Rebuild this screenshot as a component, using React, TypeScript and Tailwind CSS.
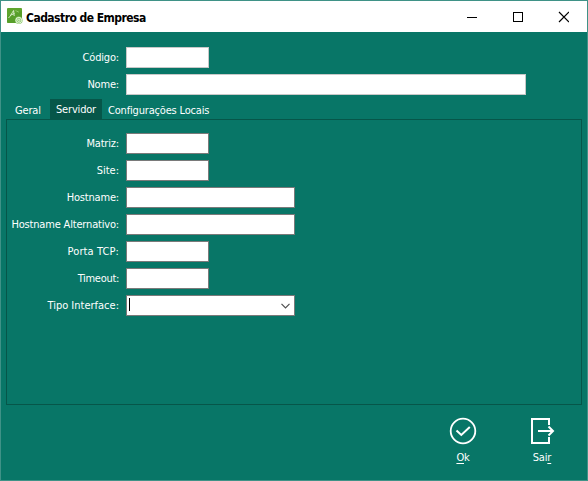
import type { ReactNode } from "react";

const font = "font-['DejaVu_Sans_Condensed','DejaVu_Sans',sans-serif] [font-stretch:condensed]";

function Field({ label, tracking = "tracking-[-0.18px]", width, border, children }: { label: string; tracking?: string; width: string; border: string; children?: ReactNode }) {
  return (
    <div className="flex h-[21px] items-center">
      <label className={`w-[118px] shrink-0 whitespace-nowrap text-right leading-[21px] ${tracking}`}>{label}</label>
      <div className={`ml-[7px] flex h-[21px] items-center border bg-white ${width} ${border}`}>{children}</div>
    </div>
  );
}

function AppIcon() {
  return (
    <svg width="16" height="17" viewBox="0 0 16 17" fill="none">
      <rect width="15" height="15" rx="1" fill="#5fa52e" />
      <path d="M0 8L15 3V14a1 1 0 0 1-1 1H1a1 1 0 0 1-1-1Z" fill="#519a28" opacity=".6" />
      <path d="M1.5 10C3.5 8 5 5 6.6 2.5L7.2 8M3.5 7.2L7.5 5.5" stroke="#e4f3d8" strokeWidth=".9" />
      <path d="M9 2.5l1 1M10.5 3.5l1 .5" stroke="#b9df9d" strokeWidth="1" />
      <circle cx="11.8" cy="12.3" r="3.8" fill="#8cc96b" />
      <circle cx="11.8" cy="12.3" r="2.9" stroke="#effae8" strokeWidth=".9" />
      <circle cx="11.8" cy="12.3" r="1.2" stroke="#effae8" strokeWidth=".8" />
    </svg>
  );
}

export default function App() {
  const light = "border-[#c8c8c8]";
  const dark = "border-[#7a7a7a]";
  return (
    <div className={`flex h-[481px] w-[588px] flex-col overflow-hidden border border-[#3f9287] bg-[#087667] text-[11px] text-white ${font}`}>
      <header className="flex h-[31px] shrink-0 items-center bg-white text-black">
        <div className="ml-[6px] mt-[-1px]"><AppIcon /></div>
        <h1 className="ml-[3px] mt-[2px] flex-1 whitespace-nowrap text-[12px] font-bold tracking-[-0.53px]">Cadastro de Empresa</h1>
        <svg width="102" height="12" viewBox="0 0 102 12" fill="none" stroke="#000" className="mr-[18px]">
          <path d="M0 6.5H10M46.5 1.5H55.5V10.5H46.5Z" shapeRendering="crispEdges" />
          <path d="M92 1L102 11M102 1L92 11" strokeWidth="1.2" />
        </svg>
      </header>
      <section className="flex flex-col gap-[6px] pt-[15px]">
        <Field label="Código:" width="w-[83px]" border={light} />
        <Field label="Nome:" width="w-[400px]" border={light} />
      </section>
      <nav className="mt-1 flex h-5 shrink-0 whitespace-nowrap leading-[23px] tracking-[-0.18px]">
        <span className="ml-[14px] w-[35px]">Geral</span>
        <span className="w-[52px] bg-[#065649] text-center leading-[21px]">Servidor</span>
        <span className="ml-[6px]">Configurações Locais</span>
      </nav>
      <main className="ml-[5px] flex h-[286px] w-[576px] shrink-0 flex-col gap-[6px] border border-[#065649] pt-[13px]">
        <div className="-ml-[6px] flex flex-col gap-[6px]">
          <Field label="Matriz:" width="w-[83px]" border={dark} />
          <Field label="Site:" tracking="tracking-normal" width="w-[83px]" border={dark} />
          <Field label="Hostname:" width="w-[169px]" border={dark} />
          <Field label="Hostname Alternativo:" width="w-[169px]" border={dark} />
          <Field label="Porta TCP:" tracking="tracking-[0.1px]" width="w-[83px]" border={dark} />
          <Field label="Timeout:" tracking="tracking-[-0.3px]" width="w-[83px]" border={dark} />
          <Field label="Tipo Interface:" tracking="tracking-normal" width="w-[169px]" border={dark}>
            <span className="mb-[2px] ml-[2px] h-[13px] w-px bg-black" />
            <svg width="9" height="6" viewBox="0 0 9 6" fill="none" stroke="#505050" strokeWidth="1.2" className="ml-auto mr-[4px] mt-[1px]">
              <path d="M.5 .8L4.5 4.8L8.5 .8" />
            </svg>
          </Field>
        </div>
      </main>
      <footer className="flex justify-end pr-[19px] pt-[12px]">
        <button className="flex w-[52px] flex-col items-center">
          <svg width="28" height="28" viewBox="0 0 28 28" fill="none" stroke="#fff" strokeWidth="1.8">
            <circle cx="14" cy="14" r="12.3" />
            <path d="M7.5 13.5L12.3 18L20.8 10" strokeWidth="2" />
          </svg>
          <span className="mt-[5px] leading-[16px] tracking-[-0.18px]"><span className="underline underline-offset-2">O</span>k</span>
        </button>
        <button className="ml-[27px] flex w-[52px] flex-col items-center">
          <svg width="28" height="28" viewBox="0 0 28 28" fill="none" stroke="#fff" strokeWidth="2">
            <path d="M21 8V2H4V26H21V20M10 14H25M20.5 9.5L25 14L20.5 18.5" />
          </svg>
          <span className="mt-[5px] leading-[16px] tracking-[-0.18px]">Sai<span className="underline underline-offset-2">r</span></span>
        </button>
      </footer>
    </div>
  );
}
